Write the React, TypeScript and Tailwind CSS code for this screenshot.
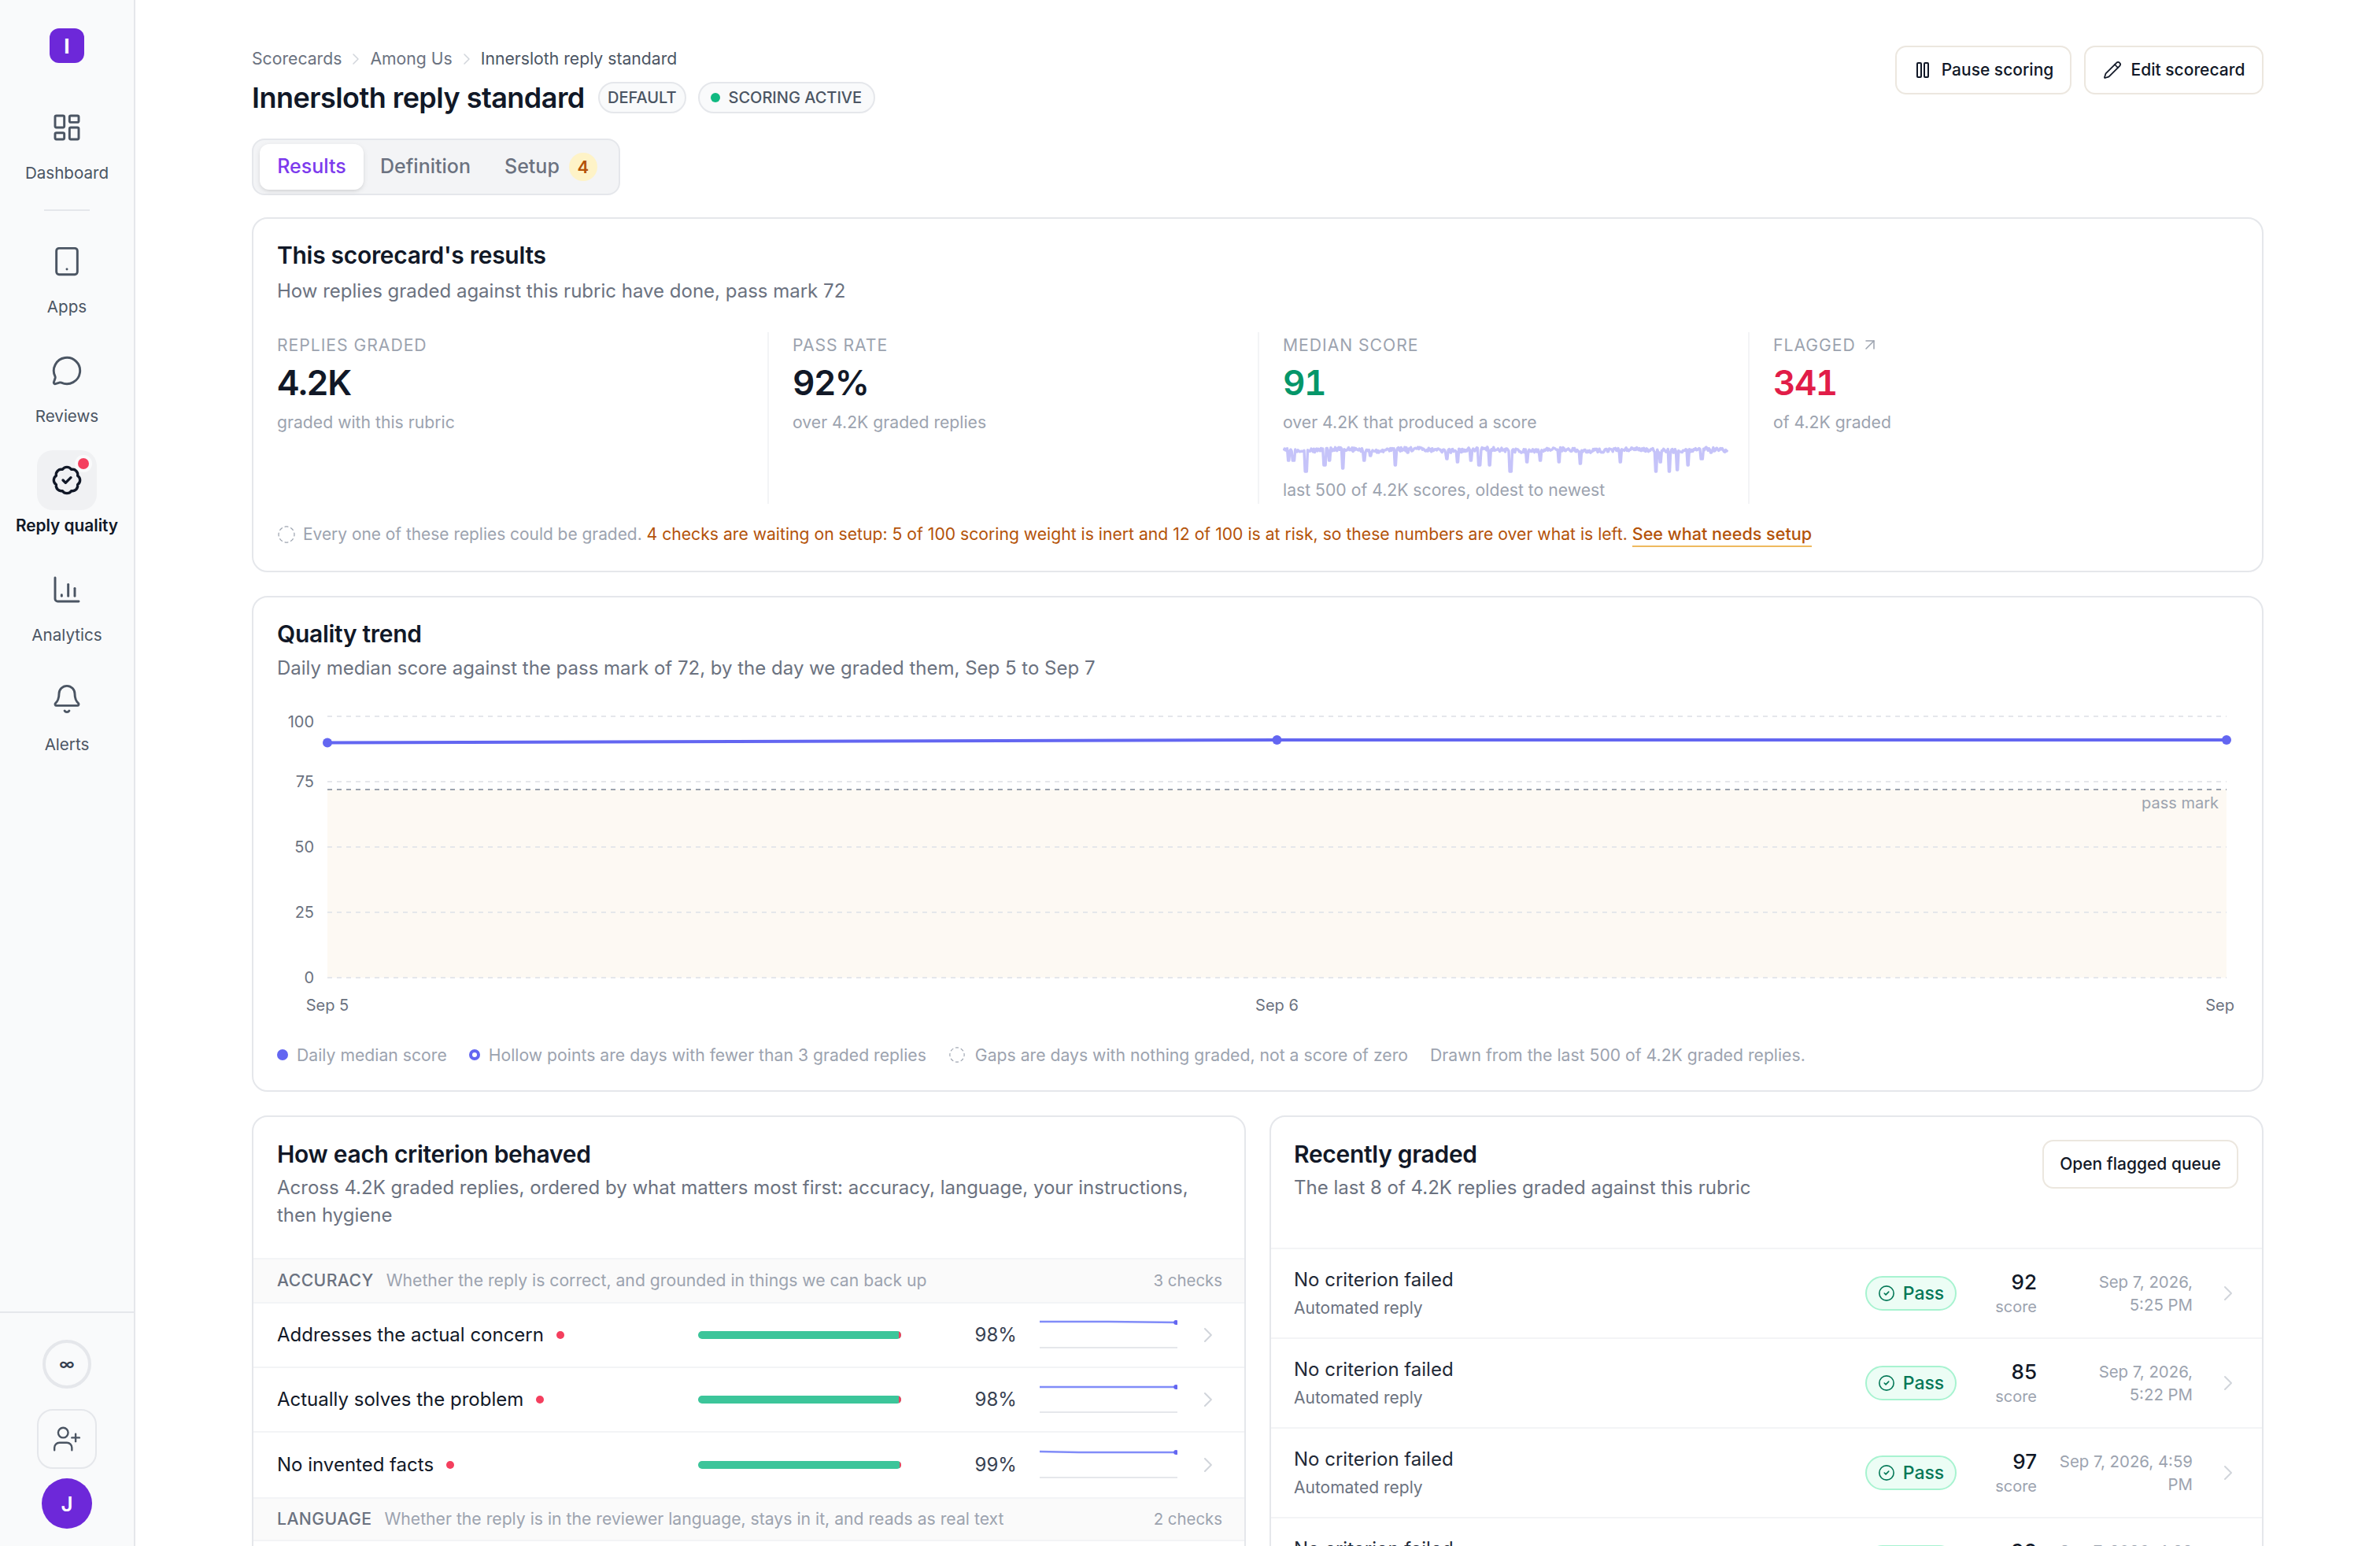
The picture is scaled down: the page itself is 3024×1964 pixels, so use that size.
import React from "react";
import { LayoutDashboard, Tablet, MessageCircle, BadgeCheck, Bell, UserPlus, Pause, Pencil, ChevronRight, ArrowUpRight, CircleDashed, CircleCheck } from "lucide-react";

function Analytics({ className }: { className?: string }) {
  return (
    <svg width="20" height="20" viewBox="0 0 24 24" fill="none" stroke="currentColor" strokeWidth="1.75" strokeLinecap="round" strokeLinejoin="round" className={className}>
      <path d="M3 3v16a2 2 0 0 0 2 2h16" />
      <path d="M8 17v-1" />
      <path d="M13 17V8" />
      <path d="M18 17v-6" />
    </svg>
  );
}

function NavItem({ icon, label, active, dot }: { icon: React.ReactNode; label: string; active?: boolean; dot?: boolean }) {
  return (
    <div className="flex flex-col items-center">
      <div className={active ? "relative flex h-[38px] w-[38px] items-center justify-center rounded-[10px] bg-[#f0f1f3] text-[#111827]" : "flex h-[38px] w-[38px] items-center justify-center text-[#4b5563]"}>
        {icon}
        {dot ? <span className="absolute right-[5px] top-[5px] h-[7px] w-[7px] rounded-full bg-[#f43f5e] ring-2 ring-[#f9fafb]" /> : null}
      </div>
      <div className={active ? "mt-[2px] text-[10.4px] font-semibold leading-4 text-[#111827]" : "mt-[2px] text-[10.3px] leading-4 text-[#4b5563]"}>{label}</div>
    </div>
  );
}

function Sidebar() {
  return (
    <aside className="flex h-full w-[86px] shrink-0 flex-col border-r border-[#e5e7eb] bg-[#f9fafb]">
      <div className="flex justify-center pt-[18px]">
        <div className="flex h-[22px] w-[22px] items-center justify-center rounded-[6px] bg-[#6d28d9] text-[13px] font-bold text-white">I</div>
      </div>
      <div className="mt-[22px] flex flex-col items-center">
        <NavItem icon={<LayoutDashboard size={20} strokeWidth={1.75} />} label="Dashboard" />
        <div className="mb-[13px] mt-[15px] h-px w-[29px] bg-[#e5e7eb]" />
        <div className="flex flex-col items-center gap-[13.5px]">
          <NavItem icon={<Tablet size={20} strokeWidth={1.75} />} label="Apps" />
          <NavItem icon={<MessageCircle size={20} strokeWidth={1.75} />} label="Reviews" />
          <NavItem icon={<BadgeCheck size={20} strokeWidth={2} />} label="Reply quality" active dot />
          <NavItem icon={<Analytics />} label="Analytics" />
          <NavItem icon={<Bell size={20} strokeWidth={1.75} />} label="Alerts" />
        </div>
      </div>
      <div className="mt-auto flex flex-col items-center border-t border-[#e5e7eb] pb-[11px] pt-[17px]">
        <div className="flex h-[31px] w-[31px] items-center justify-center rounded-full border-2 border-[#e5e7eb] text-[10px] font-semibold text-[#374151]">∞</div>
        <div className="mt-[13px] flex h-[38px] w-[38px] items-center justify-center rounded-[10px] border border-[#e5e7eb] text-[#4b5563]">
          <UserPlus size={19} strokeWidth={1.5} />
        </div>
        <div className="mt-[6px] flex h-8 w-8 items-center justify-center rounded-full bg-[#6d28d9] text-[13px] font-semibold text-white">J</div>
      </div>
    </aside>
  );
}

function Button({ icon, children, className }: { icon?: React.ReactNode; children: React.ReactNode; className?: string }) {
  return (
    <button className={"flex h-[31px] items-center justify-center gap-[6px] rounded-[7px] border border-[#ece7df] bg-white text-[10.5px] font-medium text-[#111827] " + (className ?? "")}>
      {icon}
      {children}
    </button>
  );
}

function Header() {
  return (
    <div className="flex items-start justify-between pt-[29px]">
      <div>
        <div className="flex h-[17px] items-center text-[10.6px] text-[#6b7280]">
          <span>Scorecards</span>
          <ChevronRight size={12} strokeWidth={1.5} className="mx-[3px] text-[#d1d5db]" />
          <span>Among Us</span>
          <ChevronRight size={12} strokeWidth={1.5} className="mx-[3px] text-[#d1d5db]" />
          <span className="text-[#4b5563]">Innersloth reply standard</span>
        </div>
        <div className="mt-[2px] flex h-7 items-center">
          <h1 className="text-[18px] font-semibold leading-7 tracking-[-0.015em] text-[#111827]">Innersloth reply standard</h1>
          <span className="ml-[8.5px] flex h-5 w-[56px] items-center justify-center rounded-full border border-[#e5e7eb] bg-[#f9fafb] text-[10px] font-medium text-[#4b5563]">DEFAULT</span>
          <span className="ml-[7.5px] flex h-5 w-[112.5px] items-center justify-center gap-[5px] rounded-full border border-[#e5e7eb] bg-[#f9fafb] text-[10px] font-medium text-[#4b5563]">
            <span className="h-[6px] w-[6px] rounded-full bg-[#10b981]" />
            SCORING ACTIVE
          </span>
        </div>
      </div>
      <div className="flex gap-2">
        <Button className="w-[112px]" icon={<Pause size={12} strokeWidth={2} />}>Pause scoring</Button>
        <Button className="w-[114px]" icon={<Pencil size={12} strokeWidth={1.75} />}>Edit scorecard</Button>
      </div>
    </div>
  );
}

function Tabs() {
  return (
    <div className="mt-3 flex h-9 w-[234px] items-center rounded-[8px] border border-[#e5e7eb] bg-[#f3f4f6] px-1 text-[12.5px] font-medium">
      <div className="flex h-[29px] w-[66px] items-center justify-center rounded-[6px] bg-white text-[#7c3aed] shadow-sm">Results</div>
      <div className="flex h-[29px] w-[78.5px] items-center justify-center text-[#6b7280]">Definition</div>
      <div className="flex h-[29px] items-center gap-[6px] pl-[11px] text-[#6b7280]">
        Setup
        <span className="flex h-[18px] w-[18px] items-center justify-center rounded-full bg-[#fef3c7] text-[11px] font-semibold text-[#b45309]">4</span>
      </div>
    </div>
  );
}

function mulberry(seed: number) {
  let a = seed;
  return () => {
    a = (a + 0x6d2b79f5) | 0;
    let t = Math.imul(a ^ (a >>> 15), 1 | a);
    t = (t + Math.imul(t ^ (t >>> 7), 61 | t)) ^ t;
    return ((t ^ (t >>> 14)) >>> 0) / 4294967296;
  };
}

const SPIKES: [number, number][] = [
  [0.011, 9], [0.022, 9], [0.05, 16], [0.092, 12], [0.103, 9], [0.134, 14], [0.182, 9], [0.196, 6], [0.252, 12], [0.28, 4],
  [0.368, 8], [0.392, 10], [0.422, 9], [0.441, 12], [0.464, 12], [0.511, 16], [0.548, 10], [0.578, 9], [0.621, 10], [0.668, 11],
  [0.758, 10], [0.839, 16], [0.849, 10], [0.868, 16], [0.887, 15], [0.911, 12], [0.942, 8], [0.963, 4],
];

function sparkPath(): string {
  const r = mulberry(17);
  const pts: string[] = [];
  const W = 282;
  for (let i = 0; i < 500; i++) {
    const f = i / 499;
    let y = 2 + r() * 2.6 + Math.sin(f * 38) * 0.6;
    for (const [s, h] of SPIKES) {
      if (Math.abs(f - s) < 0.0022) y = Math.max(y, h + 1);
    }
    pts.push(`${i === 0 ? "M" : "L"}${(0.5 + f * W).toFixed(2)} ${y.toFixed(2)}`);
  }
  return pts.join("");
}
const SPARK = sparkPath();

function Stat({ label, value, sub, color, first, extra, arrow }: { label: string; value: string; sub: string; color: string; first?: boolean; extra?: React.ReactNode; arrow?: boolean }) {
  return (
    <div className={first ? "min-w-0" : "min-w-0 border-l border-[#f3f4f6] pl-[15px]"}>
      <div className="flex h-4 items-center gap-[3px] text-[10.6px] leading-4 tracking-[0.045em] text-[#9ca3af]">
        {label}
        {arrow ? <ArrowUpRight size={12} strokeWidth={1.5} /> : null}
      </div>
      <div className={"text-[22px] font-semibold tabular-nums leading-8 tracking-[-0.035em] " + color}>{value}</div>
      <div className="mt-px text-[10.6px] leading-4 text-[#9ca3af]">{sub}</div>
      {extra}
    </div>
  );
}

function ResultsCard() {
  return (
    <section className="mt-[14px] rounded-[10px] border border-[#e5e7eb] bg-white px-[15px] pb-[15px] pt-[11px]">
      <h2 className="text-[15px] font-semibold leading-6 tracking-[-0.01em] text-[#111827]">This scorecard's results</h2>
      <p className="mt-[2px] text-[12px] leading-[18px] text-[#6b7280]">How replies graded against this rubric have done, pass mark 72</p>
      <div className="mt-[17px] grid h-[109px] grid-cols-4">
        <Stat first label="REPLIES GRADED" value="4.2K" sub="graded with this rubric" color="text-[#111827]" />
        <Stat label="PASS RATE" value="92%" sub="over 4.2K graded replies" color="text-[#111827]" />
        <Stat
          label="MEDIAN SCORE"
          value="91"
          sub="over 4.2K that produced a score"
          color="text-[#059669]"
          extra={
            <>
              <svg width="283" height="19" viewBox="0 0 283 19" className="mt-[6.5px] block">
                <path d={SPARK} fill="none" stroke="#c5c3f9" strokeWidth="1.7" strokeLinejoin="round" />
              </svg>
              <div className="mt-[1.5px] text-[10.6px] leading-4 text-[#9ca3af]">last 500 of 4.2K scores, oldest to newest</div>
            </>
          }
        />
        <Stat label="FLAGGED" value="341" sub="of 4.2K graded" color="text-[#e11d48]" arrow />
      </div>
      <div className="mt-[11.5px] flex h-4 items-center text-[10.58px] leading-4">
        <CircleDashed size={12} strokeWidth={1.25} className="mr-[4.5px] shrink-0 text-[#9ca3af]" />
        <span className="text-[10.45px] text-[#9ca3af]">Every one of these replies could be graded.&nbsp;</span>
        <span className="text-[#b45309]">4 checks are waiting on setup: 5 of 100 scoring weight is inert and 12 of 100 is at risk, so these numbers are over what is left.&nbsp;</span>
        <span className="border-b border-[#eeb95f] text-[10.8px] font-medium leading-[15px] text-[#b45309]">See what needs setup</span>
      </div>
    </section>
  );
}

function TrendCard() {
  const L = 32;
  const R = 1238.5;
  const grid = [10, 51.5, 93, 134.5, 176];
  const yl: [string, number][] = [["100", 13.5], ["75", 51.5], ["50", 93], ["25", 134.5], ["0", 176]];
  return (
    <section className="mt-[15px] rounded-[10px] border border-[#e5e7eb] bg-white px-[15px] pb-[14.5px] pt-[11px]">
      <h2 className="text-[15px] font-semibold leading-6 tracking-[-0.01em] text-[#111827]">Quality trend</h2>
      <p className="mt-px text-[12px] leading-[18px] text-[#6b7280]">Daily median score against the pass mark of 72, by the day we graded them, Sep 5 to Sep 7</p>
      <svg width="1246" height="205" viewBox="0 0 1246 205" className="mt-[11.5px] block">
        <rect x={L} y={56.5} width={R - L} height={119.5} fill="#fdf9f3" />
        {grid.map((y) => (
          <line key={y} x1={L} x2={R} y1={y} y2={y} stroke="#e5e7eb" strokeDasharray="3 3" strokeWidth="1" />
        ))}
        <line x1={L} x2={R} y1={56.5} y2={56.5} stroke="#9ca3af" strokeDasharray="3 3" strokeWidth="1" />
        {yl.map(([t, y]) => (
          <text key={t} x={23.5} y={y} dy="0.35em" textAnchor="end" fill="#6b7280" fontSize="10">{t}</text>
        ))}
        <text x={1233.5} y={65} dy="0.35em" textAnchor="end" fill="#9ca3af" fontSize="10">pass mark</text>
        <text x={32} y={193.5} dy="0.35em" textAnchor="middle" fill="#6b7280" fontSize="10">Sep 5</text>
        <text x={635.25} y={193.5} dy="0.35em" textAnchor="middle" fill="#6b7280" fontSize="10">Sep 6</text>
        <text x={1238.5} y={193.5} dy="0.35em" textAnchor="middle" fill="#6b7280" fontSize="10">Sep 7</text>
        <polyline points={`${L},26.7 635.25,25 ${R},25`} fill="none" stroke="#6366f1" strokeWidth="2" />
        <circle cx={L} cy={26.7} r={3} fill="#6366f1" />
        <circle cx={635.25} cy={25} r={3} fill="#6366f1" />
        <circle cx={R} cy={25} r={3} fill="#6366f1" />
      </svg>
      <div className="mt-[12px] flex h-4 items-center gap-[14px] text-[10.6px] leading-4 text-[#9ca3af]">
        <div className="flex items-center gap-[5.5px]"><span className="h-[7px] w-[7px] rounded-full bg-[#6366f1]" />Daily median score</div>
        <div className="flex items-center gap-[5.5px]"><span className="h-[7px] w-[7px] rounded-full border-2 border-[#6366f1] bg-white" />Hollow points are days with fewer than 3 graded replies</div>
        <div className="flex items-center gap-[6px]"><CircleDashed size={11} strokeWidth={1.25} className="text-[#9ca3af]" />Gaps are days with nothing graded, not a score of zero</div>
        <div>Drawn from the last 500 of 4.2K graded replies.</div>
      </div>
    </section>
  );
}

function SectionHead({ name, desc, count, short }: { name: string; desc: string; count: string; short?: boolean }) {
  return (
    <div className={"flex items-center border-y border-[#f3f4f6] bg-[#fafafa] pl-[15px] pr-[14px] text-[10.6px] " + (short ? "h-[28px]" : "h-[29px]")}>
      <span className="font-medium tracking-[0.02em] text-[#6b7280]">{name}</span>
      <span className="ml-2 text-[#9ca3af]">{desc}</span>
      <span className="ml-auto text-[10.2px] text-[#9ca3af]">{count}</span>
    </div>
  );
}

function Criterion({ name, pct, red, line, last }: { name: string; pct: string; red: number; line: string; last?: boolean }) {
  return (
    <div className={"flex h-[41px] items-center px-[15px] " + (last ? "" : "border-b border-[#f3f4f6]")}>
      <div className="flex w-[268.5px] items-center gap-[8px] text-[12px] text-[#111827]">
        {name}
        <span className="h-[5px] w-[5px] rounded-full bg-[#f43f5e]" />
      </div>
      <div className="flex h-[5px] w-[129.5px] overflow-hidden rounded-full bg-[#3cc59a]">
        <div className="flex-1" />
        <div className="bg-[#f43f5e]" style={{ width: red }} />
      </div>
      <div className="w-[74px] text-right text-[12px] text-[#374151]">{pct}</div>
      <svg width="88" height="20" viewBox="0 0 88 20" className="ml-[14.5px] block">
        <line x1="0" x2="88" y1="18" y2="18" stroke="#e5e7eb" strokeWidth="1" />
        <polyline points={line} fill="none" stroke="#818cf8" strokeWidth="1.25" />
        <circle cx="87" cy="2" r="1.5" fill="#6366f1" />
      </svg>
      <ChevronRight size={16} strokeWidth={1.5} className="ml-[11.5px] text-[#d1d5db]" />
    </div>
  );
}

function CriteriaCard() {
  return (
    <section className="h-[400px] rounded-[10px] border border-[#e5e7eb] bg-white">
      <div className="px-[15px] pb-[18.5px] pt-[11.5px]">
        <h2 className="text-[15px] font-semibold leading-6 tracking-[-0.01em] text-[#111827]">How each criterion behaved</h2>
        <p className="mt-[0.5px] text-[12px] leading-[17.5px] text-[#6b7280]">Across 4.2K graded replies, ordered by what matters most first: accuracy, language, your instructions, then hygiene</p>
      </div>
      <SectionHead name="ACCURACY" desc="Whether the reply is correct, and grounded in things we can back up" count="3 checks" />
      <Criterion name="Addresses the actual concern" pct="98%" red={1.5} line="0,1.5 44,1.5 88,2" />
      <Criterion name="Actually solves the problem" pct="98%" red={1.5} line="0,2 88,2" />
      <Criterion name="No invented facts" pct="99%" red={1} line="0,1.5 25,2 88,2" last />
      <SectionHead short name="LANGUAGE" desc="Whether the reply is in the reviewer language, stays in it, and reads as real text" count="2 checks" />
    </section>
  );
}

function Graded({ score, date }: { score: string; date: [string, string] }) {
  return (
    <div className="flex h-[57px] shrink-0 items-center border-b border-[#f3f4f6] pl-[14.5px] pr-[15px]">
      <div className="min-w-0 flex-1 pt-px">
        <div className="text-[12px] leading-[18px] text-[#1f2937]">No criterion failed</div>
        <div className="text-[10.5px] leading-[18px] text-[#6b7280]">Automated reply</div>
      </div>
      <div className="flex h-[22px] w-[58px] items-center justify-center gap-[5px] rounded-full border border-[#a7f3d0] bg-[#ecfdf5] text-[11.5px] font-medium text-[#047857]">
        <CircleCheck size={11} strokeWidth={1.75} />
        Pass
      </div>
      <div className="w-[51px] text-right">
        <div className="text-[13px] font-medium leading-[17px] text-[#111827]">{score}</div>
        <div className="text-[10px] leading-[14px] text-[#9ca3af]">score</div>
      </div>
      <div className="ml-[11px] w-[88px] whitespace-nowrap text-right text-[10.2px] leading-[14.5px] text-[#9ca3af]">
        {date[0]}
        <br />
        {date[1]}
      </div>
      <ChevronRight size={16} strokeWidth={1.5} className="-mr-[1.5px] ml-[14.5px] text-[#d1d5db]" />
    </div>
  );
}

function RecentCard() {
  return (
    <section className="h-[400px] rounded-[10px] border border-[#e5e7eb] bg-white">
      <div className="flex h-[84px] items-start justify-between border-b border-[#f3f4f6] pl-[14.5px] pr-[15px] pt-[11.5px]">
        <div>
          <h2 className="text-[15px] font-semibold leading-6 tracking-[-0.01em] text-[#111827]">Recently graded</h2>
          <p className="mt-[0.5px] text-[12px] leading-[17.5px] text-[#6b7280]">The last 8 of 4.2K replies graded against this rubric</p>
        </div>
        <Button className="mt-[3px] w-[124.5px]">Open flagged queue</Button>
      </div>
      <Graded score="92" date={["Sep 7, 2026,", "5:25 PM"]} />
      <Graded score="85" date={["Sep 7, 2026,", "5:22 PM"]} />
      <Graded score="97" date={["Sep 7, 2026, 4:59", "PM"]} />
      <Graded score="98" date={["Sep 7, 2026, 4:38", "PM"]} />
    </section>
  );
}

export default function App() {
  return (
    <div className="flex h-[982px] w-[1512px] overflow-hidden bg-white font-['Inter',sans-serif] [zoom:2]">
      <Sidebar />
      <main className="min-w-0 flex-1 overflow-hidden">
        <div className="mx-auto w-[1278px]">
          <Header />
          <Tabs />
          <ResultsCard />
          <TrendCard />
          <div className="mt-[15px] grid grid-cols-2 gap-[15px]">
            <CriteriaCard />
            <RecentCard />
          </div>
        </div>
      </main>
    </div>
  );
}
